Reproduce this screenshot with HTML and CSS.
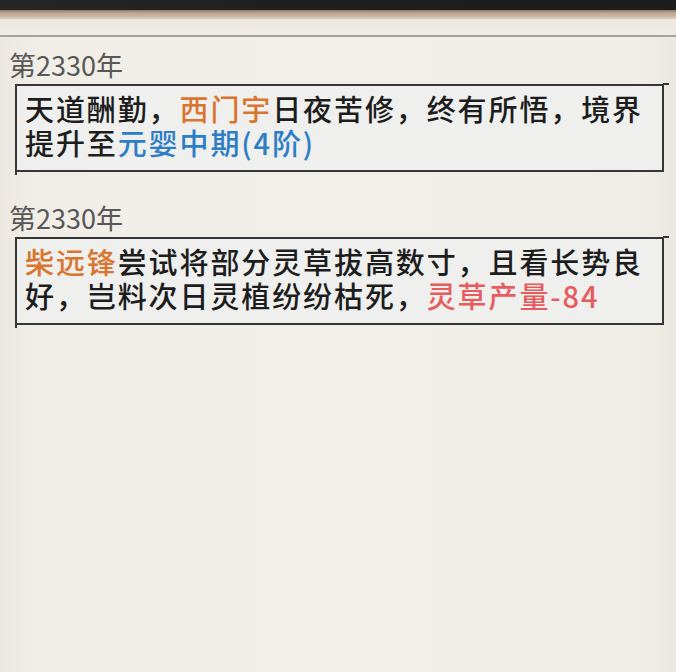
FILE: index.html
```html
<!DOCTYPE html>
<html lang="zh">
<head>
<meta charset="utf-8">
<title>日志</title>
<link rel="stylesheet" href="styles.css">
</head>
<body>
<div class="frame">
  <header class="topbar">
    <div class="topbar-dark"></div>
    <div class="topbar-trim"></div>
    <div class="topbar-light"></div>
    <div class="topbar-rule"></div>
  </header>
  <main class="log">
    <section class="entry">
      <div class="year">第2330年</div>
      <div class="card">
        <p class="msg">天道酬勤，<span class="name">西门宇</span>日夜苦修，终有所悟，境界提升至<span class="realm">元婴中期(4阶)</span></p>
      </div>
    </section>
    <section class="entry">
      <div class="year">第2330年</div>
      <div class="card">
        <p class="msg"><span class="name">柴远锋</span>尝试将部分灵草拔高数寸，且看长势良好，岂料次日灵植纷纷枯死，<span class="loss">灵草产量-84</span></p>
      </div>
    </section>
  </main>
</div>
</body>
</html>
```

FILE: styles.css
```css
* {
  box-sizing: border-box;
}

html, body {
  margin: 0;
  padding: 0;
}

body {
  width: 676px;
  height: 672px;
  overflow: hidden;
  font-family: "Noto Sans CJK SC", "Noto Sans", sans-serif;
  background: #f1eee8;
}

.frame {
  height: 672px;
  background: linear-gradient(to right, #ebe7e1 0, #f1eee8 40px, #f2efe9 50%, #f1eee8 calc(100% - 40px), #ebe8e2 100%);
}

/* window chrome along the top edge */
.topbar {
  display: flex;
  flex-direction: column;
}

.topbar-dark {
  height: 10px;
  background: linear-gradient(to right, #262624, #1f1f1e 40%, #1c1c1b);
}

.topbar-trim {
  height: 9px;
  background: linear-gradient(to bottom, #8d7a68 0, #bca791 35%, #c9b7a4 70%, #ddd2c6 100%);
}

.topbar-light {
  height: 16px;
  background: linear-gradient(to bottom, #ece7e0, #efebe5);
}

.topbar-rule {
  height: 2px;
  background: #a3a29e;
}

.log {
  padding: 11px 10px 0 8px;
  display: flex;
  flex-direction: column;
  gap: 29px;
}

.entry {
  display: flex;
  flex-direction: column;
  gap: 3px;
}

.year {
  font-size: 27px;
  font-weight: 400;
  line-height: 33px;
  color: #585755;
  padding-left: 1px;
}

.card {
  position: relative;
  margin-left: 7px;
  width: 649px;
  border: 2px solid #363636;
  background: #efefed;
  padding: 5px 8px 11px 8px;
}

/* little sketch overruns at the corners */
.card::before {
  content: "";
  position: absolute;
  top: -3px;
  right: -7px;
  width: 6px;
  height: 2px;
  background: #363636;
}

.card::after {
  content: "";
  position: absolute;
  left: -2px;
  bottom: -5px;
  width: 2px;
  height: 4px;
  background: #363636;
}

.msg {
  margin: 0;
  font-size: 29px;
  font-weight: 500;
  line-height: 34px;
  letter-spacing: 1.9px;
  color: #1d1d1d;
}

.name {
  color: #d8752f;
}

.realm {
  color: #2c7ec6;
}

.loss {
  color: #e65b5e;
}
```
